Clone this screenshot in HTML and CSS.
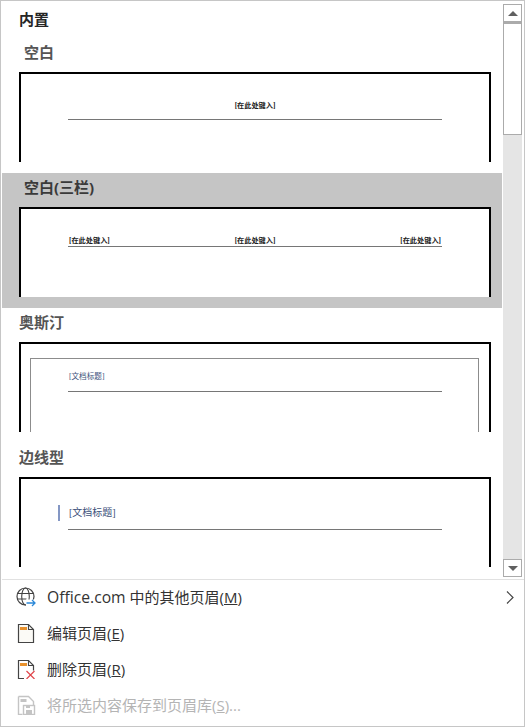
FILE: index.html
```html
<!DOCTYPE html>
<html lang="zh-CN">
<head>
    <meta charset="UTF-8">
    <title>页眉</title>
    <link rel="stylesheet" href="styles.css">
</head>
<body>

<div class="menu">
    <div class="gallery">
        <div class="list">
            <h1 class="group-title">内置</h1>

            <div class="item">
                <div class="item-label indent">空白</div>
                <div class="page">
                    <div class="doc-head center"><span class="hint">[在此处键入]</span></div>
                </div>
            </div>

            <div class="item selected">
                <div class="item-label indent">空白(三栏)</div>
                <div class="page">
                    <div class="doc-head spread">
                        <span class="hint">[在此处键入]</span>
                        <span class="hint">[在此处键入]</span>
                        <span class="hint">[在此处键入]</span>
                    </div>
                </div>
            </div>

            <div class="item">
                <div class="item-label">奥斯汀</div>
                <div class="page">
                    <div class="inner-frame">
                        <div class="doc-head austin"><span class="doc-title">[文档标题]</span></div>
                    </div>
                </div>
            </div>

            <div class="item">
                <div class="item-label">边线型</div>
                <div class="page">
                    <div class="side-row">
                        <span class="side-bar"></span>
                        <span class="side-title">[文档标题]</span>
                    </div>
                    <div class="doc-head plain"></div>
                </div>
            </div>
        </div>

        <div class="scrollbar">
            <div class="scroll-btn"><span class="arrow-up"></span></div>
            <div class="scroll-thumb"></div>
            <div class="scroll-track"></div>
            <div class="scroll-btn"><span class="arrow-down"></span></div>
        </div>
    </div>

    <div class="commands">
        <div class="command">
            <svg class="icon" width="20" height="20" viewBox="0 0 20 20" fill="none">
                <circle cx="9.5" cy="9.5" r="8.5" stroke="#444" stroke-width="1.2"/>
                <ellipse cx="9.5" cy="9.5" rx="3.8" ry="8.5" stroke="#444" stroke-width="1.1"/>
                <path d="M1.5 6.5h16M1 12h9.5" stroke="#444" stroke-width="1.1"/>
                <rect x="10" y="12.5" width="10" height="7.5" fill="#fff"/>
                <path d="M10.5 16h8.5M16 13l3 3-3 3" stroke="#2b88d8" stroke-width="1.3"/>
            </svg>
            <span class="command-text"><span class="latin">Office.com</span> 中的其他页眉(<u>M</u>)</span>
            <svg class="chevron" width="8" height="13" viewBox="0 0 8 13" fill="none">
                <path d="M1 .5l6 6-6 6" stroke="#444" stroke-width="1.2"/>
            </svg>
        </div>
        <div class="command">
            <svg class="icon" width="20" height="20" viewBox="0 0 20 20" fill="none">
                <path d="M2.5 1.5h10l5 5v13h-15z" fill="#fbfaf6" stroke="#444" stroke-width="1.2"/>
                <path d="M12.5 1.5v5h5" stroke="#444" stroke-width="1.1"/>
                <rect x="4" y="4" width="7" height="3" fill="#e8912d"/>
            </svg>
            <span class="command-text">编辑页眉(<u>E</u>)</span>
        </div>
        <div class="command">
            <svg class="icon" width="20" height="20" viewBox="0 0 20 20" fill="none">
                <path d="M8 19.5H2.5v-18h10l5 5v5" stroke="#444" stroke-width="1.2"/>
                <path d="M12.5 1.5v5h5" stroke="#444" stroke-width="1.1"/>
                <rect x="4" y="4" width="7" height="3" fill="#e8912d"/>
                <path d="M10.5 12l8 8M18.5 12l-8 8" stroke="#e0464b" stroke-width="1.2"/>
            </svg>
            <span class="command-text">删除页眉(<u>R</u>)</span>
        </div>
        <div class="command disabled">
            <svg class="icon" width="20" height="20" viewBox="0 0 20 20" fill="none">
                <path d="M2.5 1.5h10l5 5v4M2.5 1.5v18h4" stroke="#c4c4c4" stroke-width="1.4"/>
                <rect x="4.5" y="4" width="6" height="3" fill="#c4c4c4"/>
                <rect x="7.5" y="10.5" width="11" height="9" fill="#fff" stroke="#c4c4c4" stroke-width="1.4"/>
                <rect x="10" y="15" width="6" height="4" fill="#c4c4c4"/>
                <rect x="10" y="11" width="4" height="2" fill="#c4c4c4"/>
            </svg>
            <span class="command-text">将所选内容保存到页眉库(<u>S</u>)...</span>
        </div>
    </div>
</div>

</body>
</html>
```

FILE: styles.css
```css
body {
    margin: 0;
    background: #fff;
    font-family: "Open Sans", "Noto Sans CJK SC", sans-serif;
}

.menu {
    display: flex;
    flex-direction: column;
    width: 525px;
    height: 727px;
    box-sizing: border-box;
    border: 1px solid #c6c6c6;
    padding-left: 1px;
    overflow: hidden;
}

.gallery {
    display: flex;
    height: 578px;
    border-bottom: 1px solid #e1e1e1;
}

.list {
    width: 500px;
    flex-shrink: 0;
}

.group-title {
    height: 37px;
    margin: 0;
    padding: 8px 0 0 17px;
    box-sizing: border-box;
    font-size: 15px;
    line-height: 20px;
    font-weight: 700;
    color: #262626;
}

.item {
    height: 135px;
    padding: 0 11px 0 17px;
    box-sizing: border-box;
}

.item.selected {
    background: #c5c5c5;
}

.item-label {
    height: 34px;
    font-size: 15px;
    line-height: 28px;
    font-weight: 700;
    color: #555;
}

.selected .item-label {
    color: #3a3a3a;
}

.item-label.indent {
    padding-left: 5px;
}

.page {
    height: 90px;
    box-sizing: border-box;
    border: 2px solid #000;
    border-bottom: 0;
    background: #fff;
    overflow: hidden;
}

.doc-head {
    display: flex;
    align-items: flex-end;
    height: 46px;
    margin: 0 47px;
    box-sizing: border-box;
    border-bottom: 1px solid #767676;
}

.doc-head.center {
    justify-content: center;
    padding-bottom: 8px;
}

.doc-head.spread {
    justify-content: space-between;
    height: 38px;
    padding: 0 1px;
}

.hint {
    font-family: "Liberation Serif", "Noto Sans CJK SC", serif;
    font-size: 7.2px;
    line-height: 10px;
    font-weight: 700;
    color: #222;
}

.inner-frame {
    height: 74px;
    margin: 14px 10px 0 9px;
    border: 1px solid #8c8c8c;
    border-bottom: 0;
}

.doc-head.austin {
    height: 33px;
    margin: 0 36px 0 37px;
    padding: 0 0 9px 1px;
}

.doc-title {
    font-family: "Liberation Serif", "Noto Sans CJK SC", serif;
    font-size: 7.6px;
    line-height: 10px;
    color: #3b4f7a;
}

.side-row {
    display: flex;
    align-items: center;
    height: 16px;
    margin: 26px 0 0 37px;
}

.side-bar {
    width: 2px;
    height: 16px;
    margin-right: 9px;
    background: #8497c4;
}

.side-title {
    font-family: "Liberation Serif", "Noto Sans CJK SC", serif;
    font-size: 10px;
    line-height: 14px;
    color: #3b4f7a;
}

.doc-head.plain {
    height: 9px;
}

.scrollbar {
    display: flex;
    flex-direction: column;
    width: 19px;
    margin: 3px 0 2px 1px;
}

.scroll-btn {
    display: flex;
    align-items: center;
    justify-content: center;
    height: 18px;
    box-sizing: border-box;
    border: 1px solid #ababab;
    background: #fff;
}

.arrow-up,
.arrow-down {
    width: 0;
    height: 0;
    border-left: 5px solid transparent;
    border-right: 5px solid transparent;
}

.arrow-up {
    border-bottom: 5px solid #606060;
}

.arrow-down {
    border-top: 5px solid #606060;
}

.scroll-thumb {
    height: 113px;
    box-sizing: border-box;
    border: 1px solid #ababab;
    border-top-width: 2px;
    background: #fff;
}

.scroll-track {
    flex: 1;
    background: #e5e5e5;
}

.commands {
    display: flex;
    flex-direction: column;
}

.command {
    display: flex;
    align-items: center;
    height: 36px;
    padding-left: 14px;
    font-size: 15px;
    color: #333;
}

.command.disabled {
    color: #b4b4b4;
}

.icon {
    flex-shrink: 0;
    margin-top: -2px;
}

.command-text {
    margin-left: 11px;
    margin-top: -3px;
    line-height: 20px;
}

.latin {
    font-size: 15.7px;
}

.chevron {
    margin-left: auto;
    margin-right: 10px;
    margin-top: -2px;
}
```
